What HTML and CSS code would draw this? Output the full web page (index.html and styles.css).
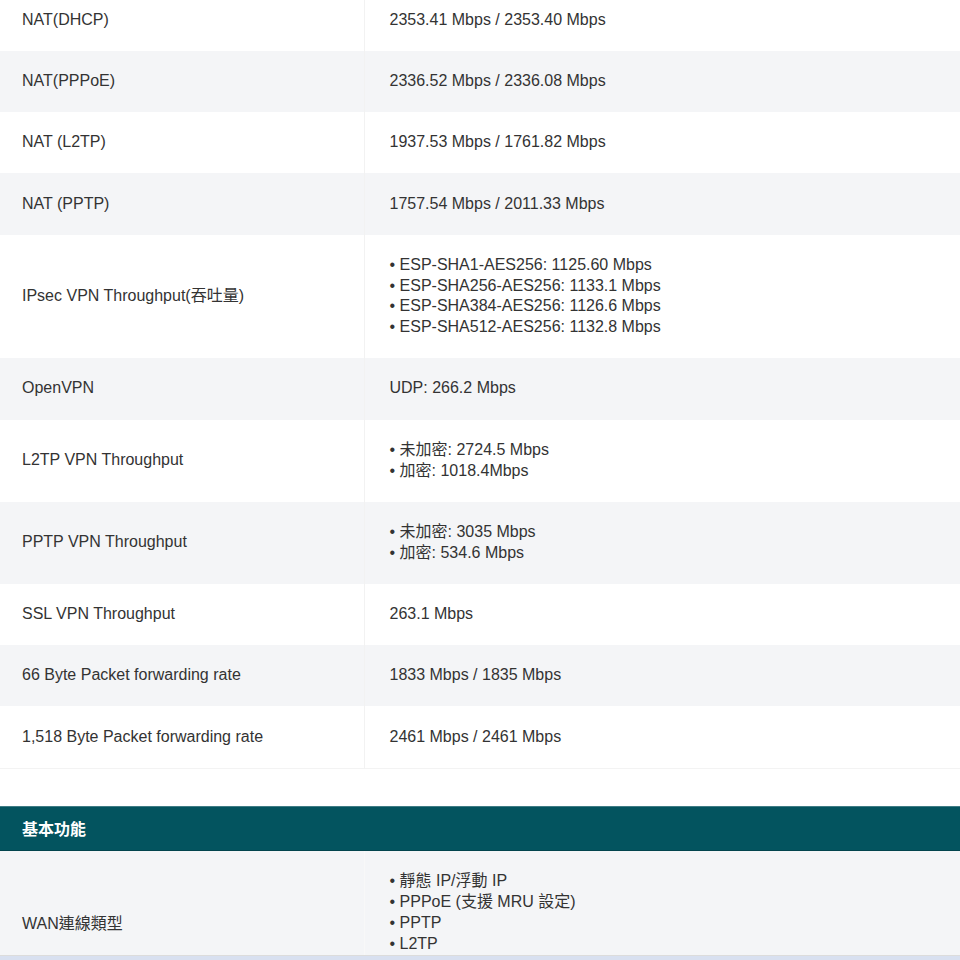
FILE: index.html
```html
<!DOCTYPE html>
<html lang="zh-Hant">
<head>
<meta charset="utf-8">
<title>規格</title>
<link rel="stylesheet" href="styles.css">
</head>
<body>
<div class="page">
  <div class="viewport">
    <table class="spec spec-first">
      <tr><td class="k">NAT(DHCP)</td><td class="v">2353.41 Mbps / 2353.40 Mbps</td></tr>
      <tr><td class="k">NAT(PPPoE)</td><td class="v">2336.52 Mbps / 2336.08 Mbps</td></tr>
      <tr><td class="k">NAT (L2TP)</td><td class="v">1937.53 Mbps / 1761.82 Mbps</td></tr>
      <tr><td class="k">NAT (PPTP)</td><td class="v">1757.54 Mbps / 2011.33 Mbps</td></tr>
      <tr><td class="k">IPsec VPN Throughput(吞吐量)</td><td class="v">• ESP-SHA1-AES256: 1125.60 Mbps<br>• ESP-SHA256-AES256: 1133.1 Mbps<br>• ESP-SHA384-AES256: 1126.6 Mbps<br>• ESP-SHA512-AES256: 1132.8 Mbps</td></tr>
      <tr><td class="k">OpenVPN</td><td class="v">UDP: 266.2 Mbps</td></tr>
      <tr><td class="k">L2TP VPN Throughput</td><td class="v">• 未加密: 2724.5 Mbps<br>• 加密: 1018.4Mbps</td></tr>
      <tr><td class="k">PPTP VPN Throughput</td><td class="v">• 未加密: 3035 Mbps<br>• 加密: 534.6 Mbps</td></tr>
      <tr><td class="k">SSL VPN Throughput</td><td class="v">263.1 Mbps</td></tr>
      <tr><td class="k">66 Byte Packet forwarding rate</td><td class="v">1833 Mbps / 1835 Mbps</td></tr>
      <tr><td class="k">1,518 Byte Packet forwarding rate</td><td class="v">2461 Mbps / 2461 Mbps</td></tr>
    </table>

    <div class="section-head">基本功能</div>

    <table class="spec spec-second">
      <tr><td class="k">WAN連線類型</td><td class="v">• 靜態 IP/浮動 IP<br>• PPPoE (支援 MRU 設定)<br>• PPTP<br>• L2TP</td></tr>
    </table>
  </div>
  <div class="bottom-strip"></div>
</div>
</body>
</html>
```

FILE: styles.css
```css
html, body {
  margin: 0;
  padding: 0;
  background: #ffffff;
}
body {
  font-family: "Liberation Sans", Arial, "Noto Sans CJK TC", sans-serif;
  font-size: 16px;
  color: #333333;
  overflow: hidden;
}
.page {
  width: 960px;
}
.viewport {
  height: 955px;
  overflow: hidden;
}
.spec {
  width: 960px;
  border-collapse: collapse;
  table-layout: fixed;
}
.spec-first {
  margin-top: -10.65px;
  border-bottom: 1px solid #f3f3f3;
}
.spec td {
  padding: 20.25px 0;
  line-height: 20.8px;
  vertical-align: middle;
}
.spec tr:nth-child(even) td {
  background: #f4f5f7;
}
.spec .k {
  width: 364px;
  padding-left: 22px;
  box-sizing: border-box;
}
.spec .v {
  padding-left: 25px;
  border-left: 1px solid #f2f2f2;
}
.section-head {
  margin-top: 37px;
  height: 45px;
  line-height: 45px;
  padding-left: 22px;
  background: #03545f;
  border-top: 1px solid #3f7c85;
  border-bottom: 1px solid #02444d;
  box-sizing: border-box;
  color: #ffffff;
  font-weight: bold;
  font-size: 16px;
}
.spec-second td {
  background: #f4f5f7;
  padding-top: 20.5px;
}
.spec-second .v {
  vertical-align: top;
  padding-bottom: 43px;
  border-left: 1px solid #f8f8f8;
}
.bottom-strip {
  height: 5px;
  background: #d8e0f0;
  border-top: 1px solid #dcdcdc;
  box-sizing: border-box;
}
```
